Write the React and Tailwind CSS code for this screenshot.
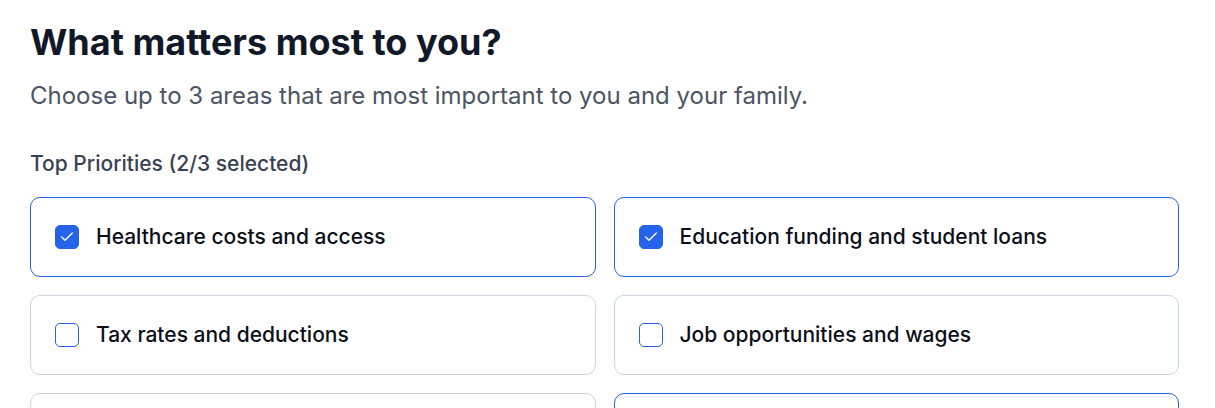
import { Check } from "lucide-react";

const priorities = [
  { label: "Healthcare costs and access", checked: true },
  { label: "Education funding and student loans", checked: true },
  { label: "Tax rates and deductions", checked: false },
  { label: "Job opportunities and wages", checked: false },
  { label: "Housing affordability", checked: false },
  { label: "Retirement security", checked: false, focused: true },
];

const PriorityCard = ({ label, checked, focused }) => (
  <label
    className={`flex items-center h-[80px] px-6 rounded-[10px] border bg-white cursor-pointer ${
      checked || focused ? "border-[#2563eb]" : "border-[#cbd5e1]"
    }`}
  >
    <span
      className={`flex items-center justify-center w-6 h-6 rounded-[5px] border ${
        checked ? "bg-[#2563eb] border-[#2563eb]" : "bg-white border-[#2563eb]"
      }`}
    >
      {checked && <Check className="w-4 h-4 text-white" strokeWidth={2} />}
    </span>
    <span className="ml-[17px] text-[21px] font-medium text-[#0b0f19]">{label}</span>
  </label>
);

const App = () => {
  return (
    <div className="min-h-screen bg-white pl-[30px] pr-[36px] pt-[20px] font-['Inter',sans-serif]">
      <h1 className="text-[36px] leading-[44px] font-bold text-[#111827]">
        What matters most to you?
      </h1>
      <p className="mt-[17px] text-[24px] leading-[30px] text-[#4b5563]">
        Choose up to 3 areas that are most important to you and your family.
      </p>
      <h2 className="mt-[39px] text-[21px] leading-[28px] font-medium text-[#374151]">
        Top Priorities (2/3 selected)
      </h2>
      <div className="mt-[19px] grid grid-cols-2 gap-x-[18px] gap-y-[18px]">
        {priorities.map((p) => (
          <PriorityCard key={p.label} {...p} />
        ))}
      </div>
    </div>
  );
};

export default App;
